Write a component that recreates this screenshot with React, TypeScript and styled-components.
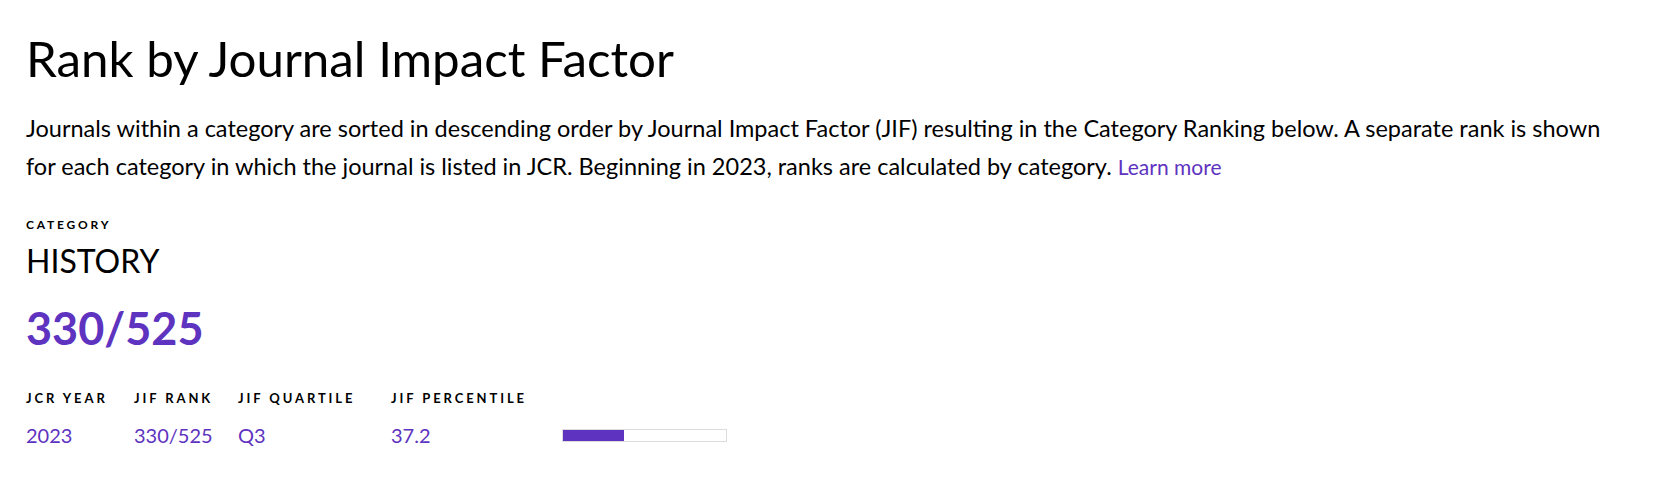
import React from "react";
import styled, { createGlobalStyle } from "styled-components";

const purple = "#5e33bf";

const Global = createGlobalStyle`
  body {
    margin: 0;
    background: #fff;
    font-family: Lato, "Liberation Sans", sans-serif;
    color: #000;
  }
`;

const Section = styled.section`
  padding: 26px 26px 40px;
  max-width: 1628px;
`;

const Title = styled.h1`
  margin: 0;
  font-size: 49.3px;
  font-weight: 400;
  line-height: 64px;
`;

const Intro = styled.p`
  margin: 20px 0 0;
  max-width: 1585px;
  font-size: 23.5px;
  line-height: 37.5px;
`;

const Link = styled.a`
  color: ${purple};
  font-size: 21px;
  text-decoration: none;
`;

const Label = styled.div<{ $size?: number; $spacing?: number }>`
  font-size: ${(p) => p.$size ?? 12}px;
  font-weight: 700;
  letter-spacing: ${(p) => p.$spacing ?? 2.8}px;
  text-transform: uppercase;
`;

const Category = styled.div`
  margin-top: 32px;
`;

const CategoryName = styled.div`
  font-size: 32px;
  line-height: 40px;
  margin-top: 9px;
`;

const BigRank = styled.div`
  color: ${purple};
  font-size: 45px;
  font-weight: 700;
  line-height: 56px;
  margin-top: 19px;
`;

const Table = styled.div`
  display: grid;
  grid-template-columns: 108px 104px 153px 171px 165px;
  row-gap: 17px;
  margin-top: 34px;
  align-items: center;
`;

const Value = styled.div`
  color: ${purple};
  font-size: 20px;
`;

const Track = styled.div`
  height: 13px;
  border: 1px solid #dcdcdc;
  box-sizing: border-box;
  background: #fff;
`;

const Fill = styled.div`
  height: 100%;
  background: ${purple};
`;

const rows = [{ year: "2023", rank: "330/525", quartile: "Q3", percentile: 37.2 }];
const headers = ["JCR Year", "JIF Rank", "JIF Quartile", "JIF Percentile"];

export default function App() {
  return (
    <>
      <Global />
      <Section>
        <Title>Rank by Journal Impact Factor</Title>
        <Intro>
          Journals within a category are sorted in descending order by Journal Impact Factor (JIF) resulting in the
          Category Ranking below. A separate rank is shown for each category in which the journal is listed in JCR.
          Beginning in 2023, ranks are calculated by category. <Link href="#">Learn more</Link>
        </Intro>
        <Category>
          <Label>Category</Label>
          <CategoryName>HISTORY</CategoryName>
          <BigRank>330/525</BigRank>
        </Category>
        <Table>
          {headers.map((h) => (
            <Label key={h} $size={13} $spacing={2.9}>
              {h}
            </Label>
          ))}
          <div />
          {rows.map((r) => (
            <React.Fragment key={r.year}>
              <Value>{r.year}</Value>
              <Value>{r.rank}</Value>
              <Value>{r.quartile}</Value>
              <Value>{r.percentile}</Value>
              <Track>
                <Fill style={{ width: `${r.percentile}%` }} />
              </Track>
            </React.Fragment>
          ))}
        </Table>
      </Section>
    </>
  );
}
